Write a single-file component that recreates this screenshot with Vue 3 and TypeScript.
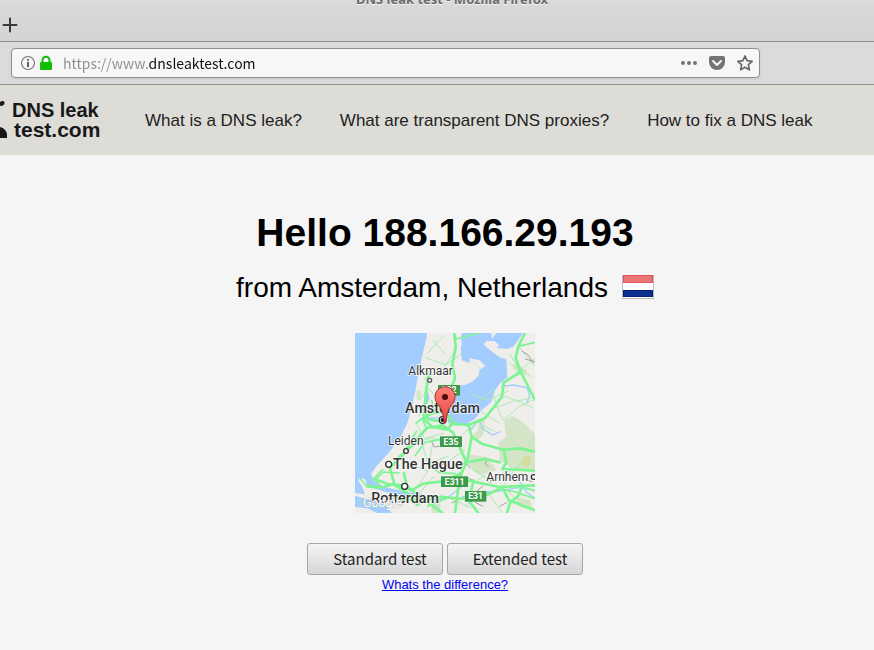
<script setup lang="ts">
import { ref } from 'vue'

interface NavLink {
  label: string
  href: string
}

interface TestOption {
  label: string
  kind: 'standard' | 'extended'
}

const address = ref('https://www.dnsleaktest.com')
const ip = '188.166.29.193'
const place = 'Amsterdam, Netherlands'

const links: NavLink[] = [
  { label: 'What is a DNS leak?', href: '#what-is-a-dns-leak' },
  { label: 'What are transparent DNS proxies?', href: '#transparent-proxies' },
  { label: 'How to fix a DNS leak', href: '#how-to-fix' },
]

const tests: TestOption[] = [
  { label: 'Standard test', kind: 'standard' },
  { label: 'Extended test', kind: 'extended' },
]
</script>

<template>
  <div class="window">
    <header class="chrome">
      <div class="titlebar"><span class="title">DNS leak test - Mozilla Firefox</span></div>
      <div class="tabs">
        <button class="icon-button" type="button" aria-label="New tab">
          <svg width="16" height="16" viewBox="0 0 16 16"><path d="M8 1.500v13M1.500 8h13" stroke="#3b3b3b" stroke-width="2" stroke-linecap="round" /></svg>
        </button>
      </div>
      <div class="toolbar">
        <div class="urlbar">
          <button class="icon-button" type="button" aria-label="Site information">
            <svg width="16" height="16" viewBox="0 0 16 16">
              <circle cx="8" cy="8" r="6.500" fill="none" stroke="#747474" stroke-width="1.100" />
              <circle cx="8" cy="4.800" r="1.100" fill="#606060" />
              <path d="M8 7v5" stroke="#606060" stroke-width="2" />
            </svg>
          </button>
          <svg class="lock" width="14" height="16" viewBox="0 0 14 16">
            <path d="M3.500 8V5.200a3.500 3.500 0 0 1 7 0V8" fill="none" stroke="#12bc00" stroke-width="2" />
            <rect x="1" y="7" width="12" height="8" rx="1" fill="#12bc00" />
          </svg>
          <input v-model="address" class="address" type="text" aria-label="Address" spellcheck="false" />
          <button class="icon-button" type="button" aria-label="Page actions">
            <svg width="18" height="16" viewBox="0 0 18 16" fill="#737373">
              <circle cx="3" cy="8" r="2" /><circle cx="9" cy="8" r="2" /><circle cx="15" cy="8" r="2" />
            </svg>
          </button>
          <button class="icon-button" type="button" aria-label="Save to Pocket">
            <svg width="18" height="16" viewBox="0 0 18 16">
              <path d="M3 1h12a2 2 0 0 1 2 2v4a8 8 0 0 1-16 0V3a2 2 0 0 1 2-2z" fill="#737373" />
              <path d="M5 6l4 4 4-4" fill="none" stroke="#f7f7f7" stroke-width="2" stroke-linecap="round" stroke-linejoin="round" />
            </svg>
          </button>
          <button class="icon-button" type="button" aria-label="Bookmark this page">
            <svg width="18" height="18" viewBox="0 0 18 18">
              <path d="M9 2l2.100 4.700 5.100.6-3.800 3.400 1 5.100L9 13.300l-4.400 2.500 1-5.100-3.800-3.400 5.100-.6z" fill="none" stroke="#6a6a6a" stroke-width="1.700" stroke-linejoin="round" />
            </svg>
          </button>
        </div>
      </div>
    </header>

    <nav class="nav">
      <a class="logo" href="#home">
        <svg class="mark" width="8" height="40" viewBox="0 0 8 40">
          <path d="M0 2c1.500-1 3-1.200 4-.4 1 1.200.6 3.200-1 3.800-1 .4-2 .1-3 .6z" fill="#181818" />
          <path d="M0 27c4 1 7 4 7 8v3H0z" fill="#181818" />
        </svg>
        <span class="wordmark">
          <span class="word">DNS leak</span>
          <span class="word domain">test.com</span>
        </span>
      </a>
      <ul class="links">
        <li v-for="link in links" :key="link.href"><a :href="link.href">{{ link.label }}</a></li>
      </ul>
    </nav>

    <main class="content">
      <h1>Hello {{ ip }}</h1>
      <p class="place">
        <span>from {{ place }}</span>
        <svg class="flag" width="32" height="24" viewBox="0 0 32 24" role="img" aria-label="Flag of the Netherlands">
          <rect x="0.500" y="0.500" width="31" height="23" fill="#fff" stroke="#bcbcbc" />
          <rect x="1" y="0" width="30" height="8" fill="#e0555a" />
          <rect x="2" y="1" width="28" height="6" fill="#ea7678" />
          <rect x="1" y="15" width="30" height="7" fill="#00207e" />
          <rect x="2" y="16" width="28" height="5" fill="#0a2f8c" />
        </svg>
      </p>

      <svg class="map" width="180" height="180" viewBox="0 0 540 540" role="img" aria-label="Map of Amsterdam">
        <rect width="540" height="540" fill="#f0eeea" />
        <!-- woodland -->
        <g fill="#d3e5c6">
          <path d="M447 262l25-12 25 12 43 40v110l-30 4-45-14-30-22-6-50 24-18z" />
          <path d="M372 258l18 4-4 40-20 24-12-20 14-14z" />
          <path d="M345 365l50 6 30 40-52 14-30-26z" />
          <path d="M230 505h26v35h-26zM185 172h12v28h-12zM478 90l40 24-8 14-36-20zM485 492l40 10 10 30-40-10z" />
        </g>
        <path d="M505 372l18-3 8 18-18 18-14-12z" fill="#d7dc9c" />
        <!-- sea, lakes and estuaries -->
        <g fill="#a3ccff">
          <path d="M0 0H216L214 18 203 63 191 118 182 168 170 223 158 268 138 310 104 356 64 400 48 422 58 446 90 462 150 476 210 486 208 492 150 488 96 478 62 468 36 456 30 438 12 436 10 444 22 462 30 484 0 480z" />
          <path d="M0 488l26 8 44 6 30 24 10 14H66l-28-14-38-4z" />
          <path d="M321 0h88l2 22-20 14 14 16 32 22 17 4 3 55-24 20-14 22-10 32-28 24-22 28-26 14-33 5-16-16-18-22 14-40 4-28 22-14 24-2 22-10 20-20 1-15 18-12-18-18-24-4-20-28-12-30z" />
          <path d="M424 0h80l-16 24-14 18-20 6-34-4-12-22z" />
          <path d="M274 242l50 6-4 18-40 4zM325 0l-8 50 4 32 22 8 4-34-6-56zM218 174l6 22-8 20-6-20z" />
        </g>
        <path d="M396 23l24 2 12 12-12 14-26-8-8-10z" fill="#f0eeea" />
        <g fill="none" stroke="#a3ccff" stroke-width="4">
          <path d="M440 160l34-4 42 8 8 24-8 22M254 254l-50 2M348 290l20-24M372 262l10 24 30 20 24-10M300 246l45 28M330 440l-14 24-44 34-80 6M320 492l50-12 60-6 60-10 50 8M490 438l25 40 25 18" />
        </g>
        <!-- secondary roads -->
        <g fill="none" stroke="#aceab5" stroke-width="3">
          <path d="M216 62l48-52M234 20l36 44M212 74l60 22 48-34M268 102l36-56M206 140l55-30M193 200l30-32 32 38M192 250l20-40M183 270l25 46 58-15M166 330l70-16 40 24M200 330l20 62 64-24M235 320l-15 82M322 304l34-26 40-32M348 182l50 20 62-28M358 218l62-52M410 180l34 82 50-42 46-22M380 238l54 32M438 186l50 18 52-12M418 225l66-24 50 24M375 275l45 20M330 350l-54 38M472 128l68-52M460 90l70 42M490 40l50 60M462 60l32 50M160 392l60 22-35 48M238 428l-50 60M110 510l100-22M12 502l50 22 44-12M254 484l95 40M350 408l60 36 42-24M440 454l62 65M400 480l42 60M468 402l-20 54M505 380l-42 50M520 330l20-15M350 455l40-30M330 522l58-50" />
          <path d="M348 82l38 34 32 52" stroke="#a2dfbd" stroke-width="2" stroke-dasharray="5 3" />
        </g>
        <g fill="none" stroke="#a5a1a3" stroke-width="3">
          <path d="M500 54l20 12 16 26M510 78l30 8M230 326l8 16 16-2M178 384l-10 18M322 403l14-10 10 14M336 434l22 10M384 458l-20 18M402 376l-12 14 10 12M272 385l-14 14M360 508l24 12M434 520l22-12M506 437l26 10M416 434l-12 16M290 510l24-12M180 505l15 10" />
        </g>
        <!-- motorways -->
        <g fill="none" stroke="#7df492" stroke-linecap="round" stroke-linejoin="round">
          <g stroke-width="8">
            <path d="M298 0l4 42-10 52 8 42-26 64-5 44-17 20-32-5-12-24 5-60 8-50M208 252l24-12 38-2 25 30-18 22-44-8-25-22M216 285l-40 44-36 40-34 34M216 285l48-8 30 22 38 84-12 36-45 25-70 8-36 20-34-12" />
            <path d="M510 0l-20 40-8 35 18 48 40 77M500 115l-54 34-5 42-50 64-50 21-54-4M340 276l10 34-12 68-24 56-14 106M350 312l30 20 64 18 50-4 46 10M446 350l8 38-12 20 98 5M326 390l64-12 45 10M298 434l46 10 90 18 106-5M445 462l-50 24-60 12-75-6-58 8M356 442l-8 34-12 20 34 44M442 464l20 38 78 30M502 458l-12 30-24 20-10 32" />
            <path d="M104 402l15 54 38 24 30 36M147 420l8 38 48 40 60 42M62 440l40 14 54 4M118 452l-40 12-42-4M104 486l38 16 62-5" />
          </g>
          <g stroke-width="5">
            <path d="M213 200l-10 60 12 28M184 270l24-20M230 203l10 38M184 295l-36 62M186 329l-65 50M180 368l30-40 76-15M60 441l25-24 48 3M220 394l32 25 48 3M218 520l65-28M540 497l-58-20-40-8M540 474l-30-10M260 182l-16 52M303 18l70-18M490 40l50-12" />
            <path d="M16 438l16 18 35 6M82 410l-26 28 18 18" />
          </g>
        </g>
        <!-- road shields -->
        <g class="shields">
          <rect x="249" y="156" width="66" height="32" /><text x="282" y="181">E22</text>
          <rect x="255" y="310" width="66" height="32" /><text x="288" y="335">E35</text>
          <rect x="258" y="430" width="81" height="32" /><text x="299" y="455">E311</text>
          <rect x="330" y="474" width="64" height="32" /><text x="362" y="499">E31</text>
        </g>
        <g class="towns">
          <text x="160" y="127">Alkmaar</text>
          <text x="99" y="337">Leiden</text>
          <text x="394" y="444">Arnhem</text>
        </g>
        <g class="cities">
          <text x="150" y="240">Amsterdam</text>
          <text x="114" y="408">The Hague</text>
          <text x="49" y="509">Rotterdam</text>
        </g>
        <text class="credit" x="24" y="523">Google</text>
        <g fill="#fff" stroke="#303030" stroke-width="4">
          <circle cx="224" cy="142" r="6" stroke="#555" />
          <circle cx="153" cy="354" r="7" />
          <circle cx="101" cy="394" r="9" />
          <circle cx="149" cy="460" r="9" />
          <circle cx="536" cy="432" r="7" />
          <circle cx="263" cy="261" r="10" />
        </g>
        <circle cx="263" cy="261" r="6" fill="#111" />
        <path d="M270 269c-4 0-4-24-11-39-9-18-19-22-19-39a30 30 0 0 1 60 0c0 17-10 21-19 39-7 15-7 39-11 39z" fill="url(#pin)" stroke="#a9302c" stroke-width="3" />
        <circle cx="270" cy="192" r="9" fill="#4c0e0b" />
        <defs>
          <linearGradient id="pin" x1="0" y1="0" x2="0" y2="1"><stop offset="0" stop-color="#ff8179" /><stop offset="1" stop-color="#e54440" /></linearGradient>
        </defs>
      </svg>

      <div class="actions">
        <button v-for="test in tests" :key="test.kind" class="test" type="button">{{ test.label }}</button>
      </div>
      <a class="difference" href="#difference">Whats the difference?</a>
    </main>
  </div>
</template>

<style>
body {
  background: #f5f5f5;
}
</style>

<style scoped>
.window {
  min-height: 100vh;
  box-sizing: border-box;
  overflow: hidden;
  background: #f5f5f5;
  color: #000;
  font-family: "Liberation Sans", Arial, sans-serif;
}

.chrome {
  font-family: "Noto Sans CJK SC", sans-serif;
  background: #d5d5d5;
}

.titlebar {
  display: flex;
  justify-content: center;
  align-items: flex-end;
  height: 8px;
  padding-left: 30px;
  overflow: hidden;
  background: linear-gradient(#dcdcdc, #d8d8d8);
}

.title {
  color: #6c6c6c;
  font: bold 13px/18px "Noto Sans", sans-serif;
  text-shadow: 0 1px #f4f4f4;
}

.tabs {
  display: flex;
  align-items: center;
  height: 33px;
  padding-left: 2px;
  border-bottom: 1px solid #8e8e8e;
  background: linear-gradient(#d8d8d8, #d4d4d4);
}

.toolbar {
  padding: 6px 114px 6px 11px;
  border-bottom: 1px solid #8e8e8e;
  background: #dbdbdb;
}

.urlbar {
  display: flex;
  align-items: center;
  box-sizing: border-box;
  height: 30px;
  padding: 0 5px 0 8px;
  border: 1px solid #8e8e8e;
  border-radius: 4px;
  background: #f7f7f7;
  box-shadow: 0 1px 3px #c9c9c9;
}

.icon-button {
  display: flex;
  padding: 0;
  border: 0;
  background: none;
}

.lock {
  margin-left: 3px;
}

.urlbar .icon-button + .icon-button {
  margin-left: 10px;
}

.address {
  flex: 1;
  min-width: 0;
  margin-left: 10px;
  padding: 0;
  border: 0;
  outline: 0;
  background: linear-gradient(to right, #8d8d8d 85px, #111 85px);
  background-clip: text;
  color: transparent;
  font: 14px/24px "Noto Sans CJK SC", sans-serif;
}

.nav {
  display: flex;
  align-items: center;
  height: 70px;
  background: #dddcd7;
}

.logo {
  display: flex;
  align-items: center;
  gap: 4px;
  width: 105px;
  color: #181818;
  text-decoration: none;
}

.wordmark {
  display: flex;
  flex-direction: column;
  font: bold 20px/20px "Liberation Sans", Arial, sans-serif;
}

.word {
  white-space: nowrap;
}

.domain {
  padding-left: 2px;
  font-size: 21px;
}

.links {
  display: flex;
  gap: 38px;
  margin: 0;
  padding: 2px 0 0 40px;
  list-style: none;
  font-size: 17px;
  white-space: nowrap;
}

.links a {
  color: #222;
  text-decoration: none;
}

.content {
  display: flex;
  flex-direction: column;
  align-items: center;
  padding: 54px 0 0 16px;
}

h1 {
  margin: 0;
  font-size: 39px;
  line-height: 48px;
}

.place {
  display: flex;
  align-items: center;
  gap: 14px;
  margin: 14px 0 0;
  font-size: 28px;
  line-height: 34px;
}

.flag {
  margin-bottom: 2px;
}

.map {
  display: block;
  margin-top: 28px;
}

.map text {
  font-family: Roboto, sans-serif;
}

.shields rect {
  fill: #3a9b49;
}

.shields text {
  fill: #fff;
  font-size: 26px;
  font-weight: 700;
  text-anchor: middle;
}

.towns text,
.cities text {
  paint-order: stroke;
  stroke: #fff;
  stroke-width: 5px;
  stroke-opacity: 0.8;
  fill: #333;
}

.towns text {
  font-size: 36px;
}

.cities text {
  font-size: 43px;
  font-weight: 500;
}

.map .credit {
  paint-order: stroke;
  fill: #fff;
  stroke: #999;
  stroke-width: 3px;
  stroke-opacity: 0.5;
  font-size: 37px;
}

.actions {
  display: flex;
  gap: 4px;
  margin-top: 30px;
}

.test {
  width: 136px;
  height: 32px;
  padding: 0 0 0 10px;
  border: 1px solid #a6a6a6;
  border-radius: 3px;
  background: linear-gradient(#f5f5f5, #d6d6d6);
  color: #222;
  font: 15px/24px "Noto Sans CJK SC", sans-serif;
  white-space: nowrap;
}

.difference {
  margin-top: 2px;
  color: #0000ee;
  font-size: 13px;
  line-height: 16px;
}
</style>
